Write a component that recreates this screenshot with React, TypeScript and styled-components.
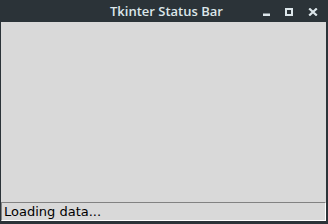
import styled, { createGlobalStyle } from "styled-components";

const Global = createGlobalStyle`
  html, body { margin: 0; padding: 0; background: #2b3338; }
  #root { width: 328px; height: 224px; }
`;

const Frame = styled.div`
  width: 328px;
  height: 224px;
  box-sizing: border-box;
  background: #2b3338;
  display: flex;
  flex-direction: column;
  padding: 0 2px 3px 1px;
`;

const TitleBar = styled.div`
  height: 22px;
  flex: none;
  display: flex;
  align-items: flex-start;
`;

const Title = styled.div`
  margin-left: 109px;
  margin-top: 3px;
  font-family: "Open Sans", sans-serif;
  font-weight: 600;
  font-size: 13px;
  line-height: 16px;
  color: #dce6ea;
`;

const Controls = styled.div`
  margin-left: auto;
  display: flex;
  align-items: flex-start;
  gap: 15px;
  padding-right: 8px;
  padding-top: 8px;
  svg { display: block; }
`;

const Body = styled.div`
  flex: 1;
  background: #d9d9d9;
`;

const StatusBar = styled.div`
  height: 19px;
  flex: none;
  box-sizing: border-box;
  background: #d9d9d9;
  border-top: 1px solid #828282;
  border-left: 1px solid #828282;
  border-bottom: 1px solid #ffffff;
  border-right: 1px solid #ffffff;
  display: flex;
  align-items: center;
  padding-left: 2px;
  font-family: "DejaVu Sans", sans-serif;
  font-size: 13px;
  color: #000;
`;

const ICON = "#dce6ea";

export default function App() {
  return (
    <>
      <Global />
      <Frame>
        <TitleBar>
          <Title>Tkinter Status Bar</Title>
          <Controls>
            <svg width="7" height="8" viewBox="0 0 7 8">
              <rect x="0" y="5.5" width="7" height="2.5" fill={ICON} />
            </svg>
            <svg width="8" height="8" viewBox="0 0 8 8">
              <rect x="1" y="1" width="6" height="6" fill="none" stroke={ICON} strokeWidth="2" />
            </svg>
            <svg width="10" height="8" viewBox="0 0 10 8">
              <path d="M1.2 0.5 L8.8 7.5 M8.8 0.5 L1.2 7.5" stroke={ICON} strokeWidth="2.2" />
            </svg>
          </Controls>
        </TitleBar>
        <Body />
        <StatusBar>Loading data...</StatusBar>
      </Frame>
    </>
  );
}
